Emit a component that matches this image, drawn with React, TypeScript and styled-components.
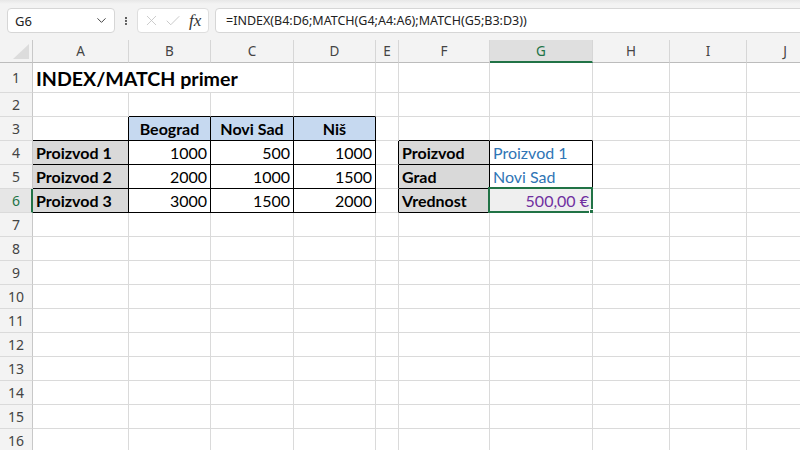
import React from "react";
import styled, { createGlobalStyle } from "styled-components";
import { ChevronDown, EllipsisVertical, X, Check } from "lucide-react";

const GlobalStyle = createGlobalStyle`
  html, body { margin: 0; padding: 0; background: #ffffff; }
  body { width: 800px; height: 450px; overflow: hidden; }
  * { box-sizing: border-box; }
`;

const GREEN = "#217346";
const GRID = "#dadada";
const HEADER_BG = "#f3f3f3";
const UI_FONT = `"Noto Sans", "Open Sans", sans-serif`;
const CELL_FONT = `Lato, "Noto Sans", sans-serif`;

const Frame = styled.div`
  width: 800px;
  height: 450px;
  overflow: hidden;
  display: flex;
  flex-direction: column;
  background: #fff;
`;

const Toolbar = styled.div`
  height: 40px;
  flex: 0 0 40px;
  display: flex;
  align-items: center;
  gap: 6px;
  padding: 1px 0 0 7px;
  background: linear-gradient(#e7e7e7 0px, #f3f3f3 4px, #f3f3f3 100%);
  font-family: ${UI_FONT};
`;

const NameBox = styled.div`
  width: 108px;
  height: 25px;
  background: #fff;
  border: 1px solid #d6d6d6;
  border-radius: 4px;
  display: flex;
  align-items: center;
  justify-content: space-between;
  padding: 0 5px 0 7px;
  font-size: 13px;
  color: #222;
`;

const Dots = styled.div`
  width: 10px;
  display: flex;
  justify-content: center;
  color: #333;
`;

const FxBox = styled.div`
  width: 72px;
  height: 25px;
  background: #fff;
  border: 1px solid #dedede;
  border-radius: 4px;
  display: flex;
  align-items: center;
  gap: 4px;
  padding: 0 4px 0 5px;
  color: #c4c4c4;
`;

const FxText = styled.span`
  font-family: "Liberation Serif", "DejaVu Serif", serif;
  font-style: italic;
  font-size: 17px;
  color: #333;
  margin-left: 3px;
  line-height: 1;
`;

const FormulaBox = styled.div`
  flex: 1;
  height: 25px;
  margin-right: -20px;
  background: #fff;
  border: 1px solid #d6d6d6;
  border-radius: 4px;
  display: flex;
  align-items: center;
  padding: 0 10px;
  font-size: 12.5px;
  color: #222;
  white-space: nowrap;
`;

const Sheet = styled.div<{ $cols: string; $rows: string }>`
  display: grid;
  grid-template-columns: ${(p) => p.$cols};
  grid-template-rows: ${(p) => p.$rows};
  flex: 1;
  overflow: hidden;
`;

const Corner = styled.div`
  background: ${HEADER_BG};
  border-right: 1px solid #c8c8c8;
  border-bottom: 1px solid #bcbcbc;
  display: flex;
  align-items: flex-end;
  justify-content: flex-end;
  padding: 0 3px 3px 0;
`;

const ColHeader = styled.div<{ $active?: boolean }>`
  background: ${(p) => (p.$active ? "#dfdfdf" : HEADER_BG)};
  border-right: 1px solid #d6d6d6;
  border-bottom: ${(p) => (p.$active ? `2px solid ${GREEN}` : "1px solid #bcbcbc")};
  display: flex;
  align-items: center;
  justify-content: center;
  font-family: ${UI_FONT};
  font-size: 13.5px;
  color: ${(p) => (p.$active ? GREEN : "#444")};
  padding-top: ${(p) => (p.$active ? "1px" : "0")};
`;

const RowHeader = styled.div<{ $active?: boolean }>`
  background: ${(p) => (p.$active ? "#e6e6e6" : HEADER_BG)};
  border-right: ${(p) => (p.$active ? `2px solid ${GREEN}` : "1px solid #c8c8c8")};
  border-bottom: 1px solid ${GRID};
  display: flex;
  align-items: center;
  justify-content: center;
  font-family: ${UI_FONT};
  font-size: 14px;
  color: ${(p) => (p.$active ? GREEN : "#444")};
  padding-left: ${(p) => (p.$active ? "1px" : "0")};
`;

type Align = "left" | "center" | "right";

const Cell = styled.div<{
  $bg: string;
  $bold?: boolean;
  $align: Align;
  $color: string;
  $rb: string;
  $bb: string;
  $size: number;
  $span: number;
}>`
  position: relative;
  grid-column: span ${(p) => p.$span};
  background: ${(p) => p.$bg};
  border-right: 1px solid ${(p) => p.$rb};
  border-bottom: 1px solid ${(p) => p.$bb};
  display: flex;
  align-items: flex-end;
  justify-content: ${(p) =>
    p.$align === "right" ? "flex-end" : p.$align === "center" ? "center" : "flex-start"};
  padding: 0 3px 2px 3px;
  font-family: ${CELL_FONT};
  font-size: ${(p) => p.$size}px;
  font-weight: ${(p) => (p.$bold ? 700 : 400)};
  color: ${(p) => p.$color};
  white-space: nowrap;
  line-height: 1.2;
`;

const Selection = styled.div`
  position: absolute;
  left: -2px;
  top: -2px;
  right: -1px;
  bottom: -1px;
  border: 2px solid ${GREEN};
  pointer-events: none;
`;

const Handle = styled.div`
  position: absolute;
  right: -4px;
  bottom: -4px;
  width: 6px;
  height: 6px;
  background: ${GREEN};
  border: 1px solid #fff;
`;

const columns = [
  { key: "A", w: 96 },
  { key: "B", w: 82 },
  { key: "C", w: 83 },
  { key: "D", w: 82 },
  { key: "E", w: 23 },
  { key: "F", w: 91 },
  { key: "G", w: 103 },
  { key: "H", w: 77 },
  { key: "I", w: 77 },
  { key: "J", w: 77 },
];

const ROWS = 16;

type CellDef = {
  v: string;
  bold?: boolean;
  align?: Align;
  color?: string;
  bg?: string;
  size?: number;
  span?: number;
};

const BLUE_FILL = "#c6d9f0";
const GRAY_FILL = "#d9d9d9";
const LINK_BLUE = "#2f75b5";

const data: Record<string, CellDef> = {
  A1: { v: "INDEX/MATCH primer", bold: true, size: 19.6, span: 3 },
  B3: { v: "Beograd", bold: true, align: "center", bg: BLUE_FILL },
  C3: { v: "Novi Sad", bold: true, align: "center", bg: BLUE_FILL },
  D3: { v: "Niš", bold: true, align: "center", bg: BLUE_FILL },
  A4: { v: "Proizvod 1", bold: true, bg: GRAY_FILL },
  A5: { v: "Proizvod 2", bold: true, bg: GRAY_FILL },
  A6: { v: "Proizvod 3", bold: true, bg: GRAY_FILL },
  B4: { v: "1000", align: "right" },
  C4: { v: "500", align: "right" },
  D4: { v: "1000", align: "right" },
  B5: { v: "2000", align: "right" },
  C5: { v: "1000", align: "right" },
  D5: { v: "1500", align: "right" },
  B6: { v: "3000", align: "right" },
  C6: { v: "1500", align: "right" },
  D6: { v: "2000", align: "right" },
  F4: { v: "Proizvod", bold: true, bg: GRAY_FILL },
  F5: { v: "Grad", bold: true, bg: GRAY_FILL },
  F6: { v: "Vrednost", bold: true, bg: GRAY_FILL },
  G4: { v: "Proizvod 1", color: LINK_BLUE },
  G5: { v: "Novi Sad", color: LINK_BLUE },
  G6: { v: "500,00 €", color: "#7030a0", align: "right", bg: "#efefef" },
};

const inRange = (c: number, r: number, c1: number, r1: number, c2: number, r2: number) =>
  c >= c1 && c <= c2 && r >= r1 && r <= r2;

// column index: A=0
const bordered = (c: number, r: number) =>
  inRange(c, r, 1, 3, 3, 3) || inRange(c, r, 0, 4, 3, 6) || inRange(c, r, 5, 4, 6, 6);

const ACTIVE = { c: 6, r: 6 };

export default function App() {
  const cols = `33px ${columns.map((c) => `${c.w}px`).join(" ")}`;
  const rows = `23px 30px ${Array(ROWS - 1).fill("24px").join(" ")}`;

  const cells: React.ReactNode[] = [];
  cells.push(
    <Corner key="corner">
      <svg width="16" height="15" viewBox="0 0 16 15">
        <polygon points="16,0 16,15 0,15" fill="#dcdcdc" />
      </svg>
    </Corner>
  );
  columns.forEach((col, ci) => {
    cells.push(
      <ColHeader key={`h-${col.key}`} $active={ci === ACTIVE.c}>
        {col.key}
      </ColHeader>
    );
  });

  for (let r = 1; r <= ROWS; r++) {
    cells.push(
      <RowHeader key={`r-${r}`} $active={r === ACTIVE.r}>
        {r}
      </RowHeader>
    );
    let skip = 0;
    columns.forEach((col, ci) => {
      if (skip > 0) {
        skip--;
        return;
      }
      const id = `${col.key}${r}`;
      const d = data[id];
      const span = d?.span ?? 1;
      skip = span - 1;
      const last = ci + span - 1;
      const b = bordered(ci, r);
      const rb = b || bordered(last + 1, r) ? "#000" : GRID;
      const bb = b || bordered(ci, r + 1) ? "#000" : GRID;
      const active = ci === ACTIVE.c && r === ACTIVE.r;
      cells.push(
        <Cell
          key={id}
          $span={span}
          $bg={d?.bg ?? "#fff"}
          $bold={d?.bold}
          $align={d?.align ?? "left"}
          $color={d?.color ?? "#000"}
          $rb={rb}
          $bb={bb}
          $size={d?.size ?? 16}
        >
          {d?.v}
          {active && (
            <Selection>
              <Handle />
            </Selection>
          )}
        </Cell>
      );
    });
  }

  return (
    <>
      <GlobalStyle />
      <Frame>
        <Toolbar>
          <NameBox>
            <span>G6</span>
            <ChevronDown size={15} strokeWidth={1.6} color="#444" />
          </NameBox>
          <Dots>
            <EllipsisVertical size={16} strokeWidth={3} />
          </Dots>
          <FxBox>
            <X size={17} strokeWidth={1.2} />
            <Check size={18} strokeWidth={1.2} />
            <FxText>fx</FxText>
          </FxBox>
          <FormulaBox>=INDEX(B4:D6;MATCH(G4;A4:A6);MATCH(G5;B3:D3))</FormulaBox>
        </Toolbar>
        <Sheet $cols={cols} $rows={rows}>
          {cells}
        </Sheet>
      </Frame>
    </>
  );
}
